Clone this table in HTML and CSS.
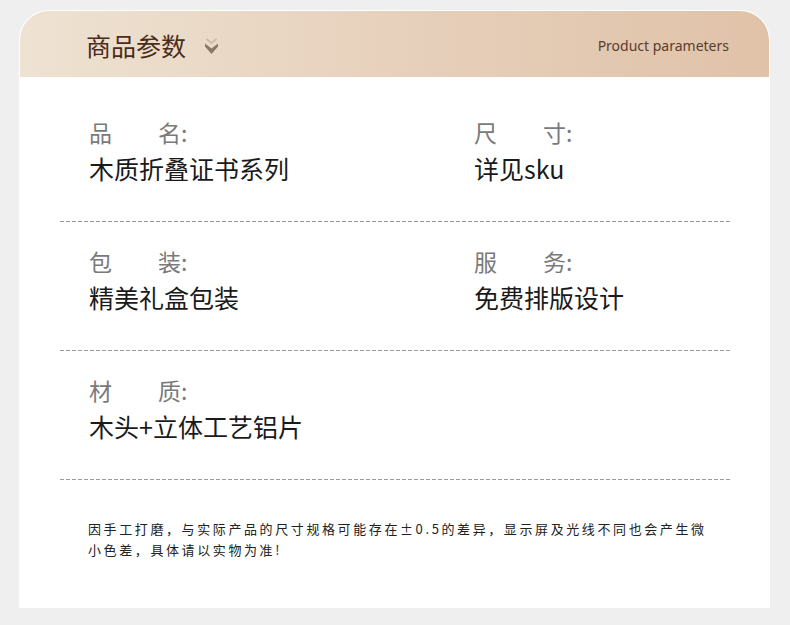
FILE: index.html
```html
<!DOCTYPE html>
<html lang="zh-CN">
<head>
<meta charset="utf-8">
<title>商品参数</title>
<link rel="stylesheet" href="styles.css">
</head>
<body>
<div class="card">
  <div class="header">
    <div class="title-wrap">
      <span class="title">商品参数</span>
      <svg class="chev" width="15" height="18" viewBox="0 0 15 18">
        <polyline points="2.5,2 7.5,6 12.5,2" fill="none" stroke="#cdbba8" stroke-width="2"/>
        <polygon points="1,6.5 7.5,11.5 14,6.5 14,9.5 7.5,17 1,9.5" fill="#8c7666"/>
      </svg>
    </div>
    <span class="subtitle">Product parameters</span>
  </div>
  <div class="body">
    <div class="row">
      <div class="cell">
        <div class="label">品　　名:</div>
        <div class="value">木质折叠证书系列</div>
      </div>
      <div class="cell">
        <div class="label">尺　　寸:</div>
        <div class="value">详见sku</div>
      </div>
    </div>
    <div class="divider"></div>
    <div class="row">
      <div class="cell">
        <div class="label">包　　装:</div>
        <div class="value">精美礼盒包装</div>
      </div>
      <div class="cell">
        <div class="label">服　　务:</div>
        <div class="value">免费排版设计</div>
      </div>
    </div>
    <div class="divider"></div>
    <div class="row">
      <div class="cell">
        <div class="label">材　　质:</div>
        <div class="value">木头+立体工艺铝片</div>
      </div>
    </div>
    <div class="divider"></div>
    <p class="note">因手工打磨，与实际产品的尺寸规格可能存在±0.5的差异，显示屏及光线不同也会产生微小色差，具体请以实物为准!</p>
  </div>
</div>
</body>
</html>
```
FILE: styles.css
```css
html, body {
  margin: 0;
  padding: 0;
}
body {
  background: #efefef;
  font-family: "Noto Sans CJK SC", "Noto Sans", sans-serif;
  width: 790px;
  height: 625px;
  overflow: hidden;
}
.card {
  margin: 10px 0 0 19px;
  width: 751px;
  height: 598px;
  background: #ffffff;
  border-radius: 30px 30px 0 0;
  padding: 1px 1px 0;
  box-sizing: border-box;
}
.header {
  height: 66px;
  border-radius: 29px 29px 0 0;
  background: linear-gradient(90deg, #eee2d2 0%, #e6cfba 55%, #e0c2a8 100%);
  display: flex;
  align-items: center;
  justify-content: space-between;
  padding: 0 40px 0 66px;
}
.title-wrap {
  display: flex;
  align-items: center;
  gap: 18px;
}
.title {
  font-size: 25px;
  color: #4a2c1a;
  line-height: 30px;
  position: relative;
  top: 1px;
}
.chev {
  display: block;
  margin-top: 4px;
}
.subtitle {
  font-family: "Noto Sans", "Open Sans", sans-serif;
  font-size: 14px;
  color: #5a3d2c;
  position: relative;
  top: 1px;
}
.body {
  padding: 16px 39px 0 40px;
}
.row {
  display: grid;
  grid-template-columns: 385px 1fr;
  padding: 24px 0 36px 29px;
}
.label {
  font-size: 23px;
  line-height: 30px;
  color: #7a7a7a;
}
.value {
  font-size: 25px;
  line-height: 34px;
  color: #1a1a1a;
  margin-top: 4px;
}
.divider {
  height: 1px;
  background: repeating-linear-gradient(90deg, #9a9a9a 0 4px, transparent 4px 6px);
}
.note {
  margin: 38px 0 0 28px;
  width: 625px;
  font-size: 13px;
  line-height: 21px;
  letter-spacing: 2.6px;
  color: #222222;
}
```
